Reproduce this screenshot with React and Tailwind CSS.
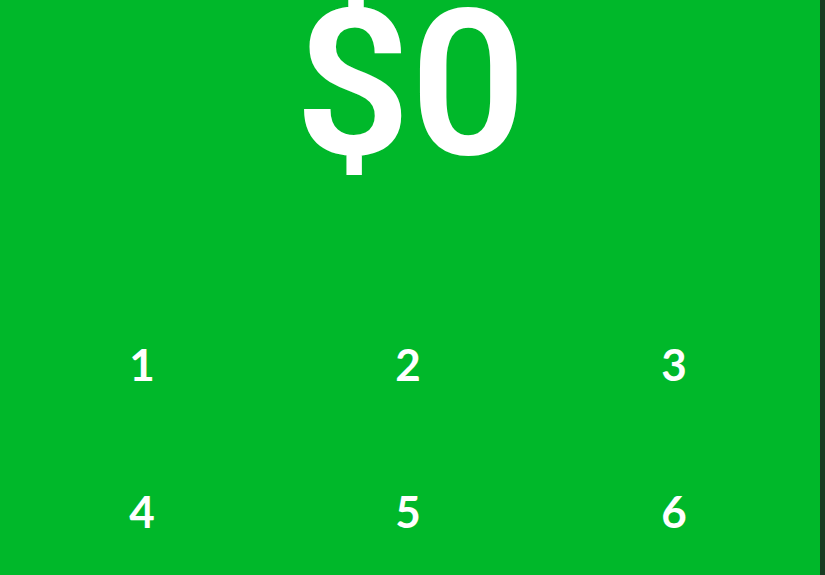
const keys = ['1', '2', '3', '4', '5', '6', '7', '8', '9', '.', '0', '‹'];

export default function App() {
  return (
    <div className="flex h-[575px] w-[825px] overflow-hidden bg-[#00b82a] font-['Lato',sans-serif] text-white">
      <div className="flex flex-1 flex-col">
        {/* amount */}
        <div className="flex h-[290px] shrink-0 justify-center">
          <div className="mt-[-17px] font-['Roboto',sans-serif] text-[204px] font-semibold leading-none tracking-[-1px]">$0</div>
        </div>

        {/* keypad */}
        <div className="grid grid-cols-3 pl-[9px] pr-[13px]">
          {keys.map((k) => (
            <button key={k} className="flex h-[147px] items-center justify-center text-[44px] font-bold">
              {k}
            </button>
          ))}
        </div>
      </div>
      <div className="w-[5px] shrink-0 bg-[#173d22]" />
    </div>
  );
}
